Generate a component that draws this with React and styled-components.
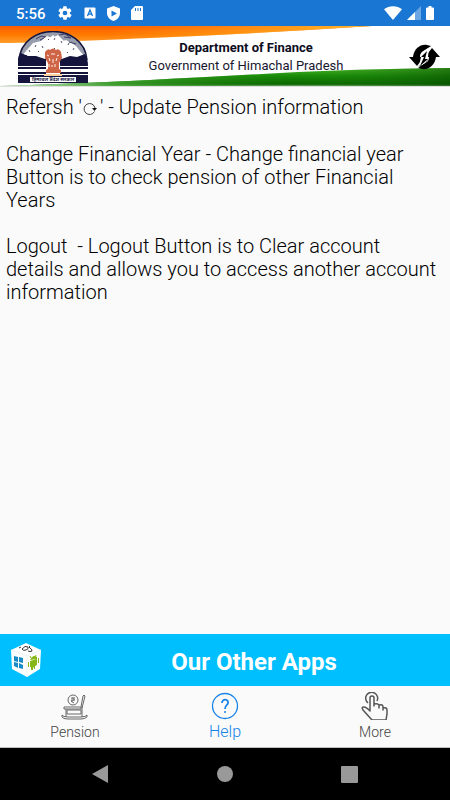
import React from "react";
import styled, { createGlobalStyle } from "styled-components";

const GlobalStyle = createGlobalStyle`
  * { box-sizing: border-box; }
  body { margin: 0; font-family: Roboto, "Noto Sans", sans-serif; background: #fafafa; }
  button { font: inherit; border: 0; padding: 0; background: none; cursor: pointer; }
  svg { display: block; flex: none; }
`;

const Screen = styled.div`
  display: flex;
  flex-direction: column;
  min-height: 100vh;
  background: #fafafa;
`;

const StatusBar = styled.div`
  display: flex;
  align-items: center;
  height: 26px;
  padding: 0 16px 0 16px;
  background: #1976d2;
  color: #fff;
`;

const Clock = styled.time`
  font-size: 15px;
  line-height: 26px;
  font-weight: 500;
  padding-top: 2px;
`;

const StatusIcons = styled.div`
  display: flex;
  align-items: center;
  gap: ${(p) => p.$gap}px;
  margin-left: ${(p) => (p.$end ? "auto" : "11px")};
`;

const Header = styled.header`
  position: relative;
  display: flex;
  align-items: center;
  height: 61px;
  padding: 0 10px 0 17px;
  background: #fff;
`;

const Flag = styled.svg`
  position: absolute;
  inset: 0;
  width: 100%;
  height: 100%;
`;

const Emblem = styled.svg`
  position: relative;
`;

const Titles = styled.div`
  position: relative;
  flex: 1;
  padding-right: 6px;
  text-align: center;
  color: #17172f;
`;

const Department = styled.h1`
  margin: 0;
  font-size: 13px;
  line-height: 18px;
  font-weight: 700;
  color: #0c0c20;
`;

const Government = styled.p`
  margin: 0;
  font-size: 13px;
  line-height: 18px;
`;

const Refresh = styled.button`
  position: relative;
  color: #000;
`;

const Content = styled.main`
  flex: 1;
  padding: 9px 10px 9px 6px;
  color: #000;
`;

const Paragraph = styled.p`
  margin: 0 0 23px;
  font-size: 20px;
  line-height: 23px;
  font-weight: 300;
  white-space: pre-wrap;
`;

const InlineIcon = styled.svg`
  && { display: inline-block; vertical-align: -6px; margin: 0 2px 0 1px; }
`;

const AppsBanner = styled.button`
  && {
    display: flex;
    align-items: center;
    width: 100%;
    height: 52px;
    padding: 0 10px;
    background: #00bfff;
    color: #fff;
    font-size: 24px;
    font-weight: 700;
  }
`;

const BannerLabel = styled.span`
  flex: 1;
  padding-left: 26px;
  padding-top: 3px;
`;

const Tabs = styled.nav`
  display: grid;
  grid-template-columns: repeat(3, 1fr);
  height: 62px;
  border-bottom: 1px solid #bdbdbd;
`;

const Tab = styled.button`
  && {
    display: flex;
    flex-direction: column;
    align-items: center;
    padding-top: 6px;
    gap: 3px;
    color: ${(p) => (p.$active ? "#1683e8" : "#444")};
    font-size: ${(p) => (p.$active ? 16 : 14)}px;
    line-height: 18px;
    font-weight: 300;
  }
`;

const SystemNav = styled.nav`
  display: grid;
  grid-template-columns: 1fr 1fr 1fr;
  height: 52px;
  padding: 0 38px;
  background: #000;
`;

const SystemButton = styled.button`
  display: flex;
  align-items: center;
  justify-content: center;
  color: #999;
`;

const Gear = () => (
  <svg width="16" height="16" viewBox="0 0 24 24" fill="#fff">
    <path d="M19.4 13a7.5 7.5 0 0 0 0-2l2.1-1.7c.2-.1.3-.4.1-.6l-2-3.500c-.1-.2-.4-.3-.6-.2l-2.500 1a7.300 7.300 0 0 0-1.700-1l-.4-2.600a.5.5 0 0 0-.5-.4h-4a.5.5 0 0 0-.5.4L9 5a7.700 7.700 0 0 0-1.700 1L4.900 5c-.2-.1-.5 0-.6.2l-2 3.500c-.1.2-.1.500.1.600L4.500 11a8 8 0 0 0 0 2l-2.100 1.700c-.2.1-.2.4-.1.600l2 3.500c.1.2.4.300.6.200l2.500-1c.5.4 1.100.7 1.700 1l.4 2.600c0 .2.2.400.5.400h4c.3 0 .5-.2.5-.4l.4-2.600a7 7 0 0 0 1.700-1l2.500 1c.2.1.5 0 .6-.2l2-3.500c.1-.2.1-.5-.1-.6zM12 15.500a3.500 3.500 0 1 1 0-7 3.500 3.500 0 0 1 0 7z" />
  </svg>
);

const LetterBox = () => (
  <svg width="12" height="12" viewBox="0 0 12 12">
    <rect x="0.500" y="0.500" width="11" height="11" rx="1" fill="#fff" />
    <path d="M3.500 9 6 3l2.500 6M4.300 7.200h3.400" fill="none" stroke="#1976d2" strokeWidth="1.300" />
  </svg>
);

const Shield = () => (
  <svg width="13" height="15" viewBox="0 0 13 15">
    <path d="M6.500 0 0 2.500V7c0 3.700 2.700 6.800 6.500 8C10.300 13.800 13 10.700 13 7V2.500z" fill="#fff" />
    <path d="M4.500 4.500v6L10 7.500z" fill="#1976d2" />
  </svg>
);

const SdCard = () => (
  <svg width="12" height="14" viewBox="0 0 12 14">
    <path d="M4 0h7a1 1 0 0 1 1 1v12a1 1 0 0 1-1 1H1a1 1 0 0 1-1-1V4z" fill="#fff" />
    <path d="M4.500 2v3M7 2v3M9.500 2v3" stroke="#1976d2" strokeWidth="1" />
  </svg>
);

const Wifi = () => (
  <svg width="18" height="14" viewBox="0 0 18 14">
    <path d="M0 3.200C5 -.9 13-.9 18 3.200L9 14z" fill="#fff" />
  </svg>
);

const Signal = () => (
  <svg width="14" height="14" viewBox="0 0 14 14">
    <path d="M14 0v14H0z" fill="#6aa6e3" />
    <path d="M8 6v8H0z" fill="#fff" />
  </svg>
);

const Battery = () => (
  <svg width="8" height="14" viewBox="0 0 8 14">
    <path d="M2.500 0h3v1.500H7a1 1 0 0 1 1 1V13a1 1 0 0 1-1 1H1a1 1 0 0 1-1-1V2.500a1 1 0 0 1 1-1h1.500z" fill="#fff" />
  </svg>
);

const FlagBackground = () => (
  <Flag viewBox="0 0 450 61" preserveAspectRatio="none" aria-hidden="true">
    <defs>
      <linearGradient id="saffron" x1="0" y1="0" x2="0" y2="1">
        <stop offset="0" stopColor="#ff5c00" />
        <stop offset="0.500" stopColor="#ff7900" />
        <stop offset="1" stopColor="#ff9d2b" />
      </linearGradient>
      <linearGradient id="saffronEnd" x1="0" y1="0" x2="1" y2="0">
        <stop offset="0.300" stopColor="#ffad20" stopOpacity="0" />
        <stop offset="1" stopColor="#ffb82a" />
      </linearGradient>
      <linearGradient id="green" x1="0" y1="0" x2="0" y2="1">
        <stop offset="0" stopColor="#4cb52c" />
        <stop offset="0.450" stopColor="#198a08" />
        <stop offset="0.900" stopColor="#0b6500" />
        <stop offset="1" stopColor="#72a86b" />
      </linearGradient>
      <linearGradient id="greenStart" x1="0" y1="0" x2="1" y2="0">
        <stop offset="0" stopColor="#dff0da" />
        <stop offset="0.250" stopColor="#49aa39" stopOpacity="0.800" />
        <stop offset="0.650" stopColor="#238f0d" stopOpacity="0" />
        <stop offset="1" stopColor="#074500" stopOpacity="0.500" />
      </linearGradient>
    </defs>
    <path d="M0 0H372Q265 7 150 12T0 17z" fill="url(#saffron)" />
    <path d="M0 0H372Q265 7 150 12T0 17z" fill="url(#saffronEnd)" />
    <path d="M0 60Q90 57 150 54T280 47Q350 43 450 42V60z" fill="url(#green)" />
    <path d="M0 60Q90 57 150 54T280 47Q350 43 450 42V60z" fill="url(#greenStart)" />
    <path d="M0 60.500H450" stroke="#dedede" />
  </Flag>
);

const StateEmblem = () => (
  <Emblem width="72" height="52" viewBox="0 0 72 52" role="img" aria-label="Himachal Pradesh">
    <path d="M1 52V34C1-11 71-11 71 34V52z" fill="#fff" />
    <path d="M2 29C5-9 67-9 70 29L59 15 49 9 43 11 36 4 27 12 16 14z" fill="#989dad" />
    <path d="M2 29C5-9 67-9 70 29" fill="none" stroke="#14143c" strokeWidth="1.500" />
    <path d="m19 8 5-3 5 1-6 3m19-5 6-1 6 4-7-1m5 5 7 2" fill="none" stroke="#3b3e60" strokeWidth="1" />
    <path d="M3 27 16 12l8-2 6-5 5 2 6-3 7 7 8 2 13 14v6H3z" fill="#fff" />
    <path d="m12 19 1 2m6-7-1 2m7-1 1 2m5-9 1 1m6-2-1 2m7 1 1 2m7 0-1 2m6 3-1 2M21 21l1-1m28 1 1 1m-14-5 1 1M9 25l1-1" stroke="#51556c" strokeWidth="1" />
    <path d="M1 30C1 25 3 22 4 22l7 3 8 0 9 3 6-3 8 4 11-4 7 1 8-3c2 4 3 7 3 12H1z" fill="#14143c" />
    <path d="M1 37H71M1 42H71M1 45H71" stroke="#14143c" strokeWidth="2" />
    <path d="M1 46H71V52H1z" fill="#14143c" />
    <path d="M29 20h14v23H29z" fill="#fff" />
    <path d="M28 21q3-4 5-2 3-3 6 0 3-2 5 2l1 6-3 5v6l2 1v3H29v-3l2-1v-6l-3-5z" fill="#ce6547" />
    <path d="m30 24 2 1m10-1-2 1m-6-2h4m-6 4 1 3m7-3-1 3m-3-2v4m-4 1v3m3-2v2m3-3v3" stroke="#fff0e9" strokeWidth="1" />
    <path d="M13 46H59V51H13z" fill="#fff" />
    <path d="M27 43h18v2H27z" fill="#ffcf9d" />
    <text x="36" y="50" textAnchor="middle" fontFamily="Noto Sans, sans-serif" fontSize="5" fontWeight="700" fill="#14143c">हिमाचल प्रदेश सरकार</text>
  </Emblem>
);

const RefreshIcon = () => (
  <svg width="31" height="26" viewBox="0 0 31 26" fill="currentColor">
    <path d="M0 13h4C5 5 11 0 18 1l4 1-6 4c-4 2-5 4-5 7h4l-7 9z" />
    <path d="M31 13h-4c-1 8-7 13-14 12l-4-1 6-4c4-2 5-4 5-7h-4l7-9z" />
    <path d="M20 4c-5 2-8 5-8 9l-2 9c4-1 8-4 9-9z" fill="#fff" />
    <path d="m18 7-6 6h3l-4 9 8-7h-3z" />
    <path d="M9 22q7 0 10-7-1 5-6 8z" />
  </svg>
);

const ClockwiseArrow = () => (
  <InlineIcon width="15" height="18" viewBox="0 0 15 18" role="img" aria-label="refresh">
    <path d="M11.500 9.500A5.500 5.500 0 1 1 12 6" fill="none" stroke="#444" strokeWidth="1" />
    <path d="M9 6h5l-2.500 3z" fill="#111" />
  </InlineIcon>
);

const CubeIcon = () => (
  <svg width="32" height="34" viewBox="0 0 32 34">
    <path d="M16 0 31 7 30 26 17 34 2 26 1 7z" fill="#fff" />
    <path d="M1 7 17 13 31 7M17 13v21" fill="none" stroke="#edf3f6" />
    <path d="m9 5 2-1m1 2q3-4 6-2 1 2-2 3-3 1-4-1zm8-3q-2 1 0 2t2 3q-2 1-4 0" fill="none" stroke="#333" />
    <path d="m4 13 4 1v5l-4-1zm5 1 4 1v5l-4-1zm-5 5 4 1v5l-4-2zm5 1 4 2v4l-4-1z" fill="#168bc5" />
    <path d="M20 17q3-6 7-3v2zm0 1 7-2v6l-2 1v3h-1v-2l-1 1v2h-2v-3h-1zm-2 1h1v5h-1zm10-4h1v5h-1z" fill="#86b817" />
    <path d="m21 15-1-2m5 1 1-2" stroke="#86b817" />
  </svg>
);

const PensionIcon = () => (
  <svg width="28" height="28" viewBox="0 0 28 28" fill="none" stroke="#666" strokeWidth="1">
    <circle cx="12" cy="8" r="5" />
    <path d="M10 6h4m-4 2h4m-3-2c3 0 3 3-1 3l3 2M20 15l2-11q1-2 2 0l-3 12M3 15h17v2H3zM6 18h14v4H6zM5 17v8m16-10v10M1 23q1 2 6 2h13q5 0 6-2v2q-2 2-6 2H7q-5 0-6-2z" />
  </svg>
);

const HelpIcon = () => (
  <svg width="28" height="28" viewBox="0 0 28 28" fill="none" stroke="currentColor">
    <circle cx="14" cy="14" r="12.500" strokeWidth="1.300" />
    <path d="M11 11c0-5 7-4 6 0 0 2-3 2-3 6" strokeWidth="1.800" />
    <circle cx="14" cy="20" r="1" fill="currentColor" stroke="none" />
  </svg>
);

const TouchIcon = () => (
  <svg width="28" height="28" viewBox="0 0 28 28" fill="none" stroke="#555" strokeWidth="1.500" strokeLinejoin="round">
    <path d="M7 11a6 6 0 1 1 9-2" />
    <path d="M9 19V6q0-2 2-2t2 2v8-2q4-1 5 1v3-3q4-1 4 2v3-2q4-1 4 2v4l-1 6H11L2 18q-2-3 1-3 2 0 6 4z" />
  </svg>
);

const tabs = [
  { label: "Pension", Icon: PensionIcon },
  { label: "Help", Icon: HelpIcon, active: true },
  { label: "More", Icon: TouchIcon },
];

export default function App() {
  return (
    <Screen>
      <GlobalStyle />
      <StatusBar>
        <Clock>5:56</Clock>
        <StatusIcons $gap={11}><Gear /><LetterBox /><Shield /><SdCard /></StatusIcons>
        <StatusIcons $gap={5} $end><Wifi /><Signal /><Battery /></StatusIcons>
      </StatusBar>
      <Header>
        <FlagBackground />
        <StateEmblem />
        <Titles>
          <Department>Department of Finance</Department>
          <Government>Government of Himachal Pradesh</Government>
        </Titles>
        <Refresh aria-label="Refresh"><RefreshIcon /></Refresh>
      </Header>
      <Content>
        <Paragraph>Refersh '<ClockwiseArrow />' - Update Pension information</Paragraph>
        <Paragraph>Change Financial Year - Change financial year Button is to check pension of other Financial Years</Paragraph>
        <Paragraph>{"Logout  - Logout Button is to Clear account details and allows you to access another account information"}</Paragraph>
      </Content>
      <AppsBanner><CubeIcon /><BannerLabel>Our Other Apps</BannerLabel></AppsBanner>
      <Tabs aria-label="Main">
        {tabs.map(({ label, Icon, active }) => (
          <Tab key={label} $active={active} aria-current={active ? "page" : undefined}><Icon />{label}</Tab>
        ))}
      </Tabs>
      <SystemNav aria-label="System">
        <SystemButton aria-label="Back"><svg width="16" height="18" viewBox="0 0 16 18"><path d="M16 0v18L0 9z" fill="currentColor" /></svg></SystemButton>
        <SystemButton aria-label="Home"><svg width="16" height="16" viewBox="0 0 16 16"><circle cx="8" cy="8" r="8" fill="currentColor" /></svg></SystemButton>
        <SystemButton aria-label="Recents"><svg width="17" height="17" viewBox="0 0 17 17"><rect width="17" height="17" rx="1" fill="currentColor" /></svg></SystemButton>
      </SystemNav>
    </Screen>
  );
}
